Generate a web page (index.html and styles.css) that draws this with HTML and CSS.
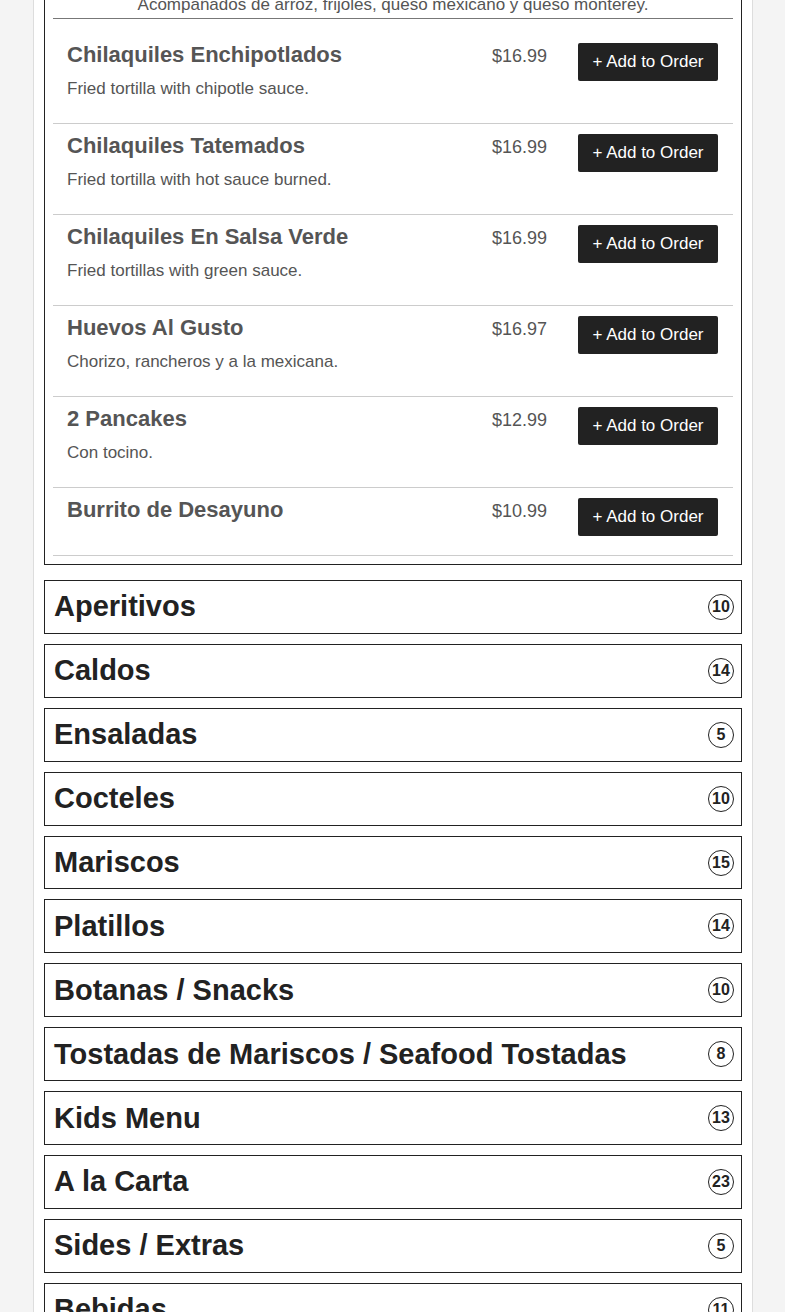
FILE: index.html
```html
<!DOCTYPE html>
<html lang="en">
<head>
<meta charset="utf-8">
<title>Menu</title>
<link rel="stylesheet" href="styles.css">
</head>
<body>
<div class="page">
  <section class="category open">
    <div class="cat-desc">Acompañados de arroz, frijoles, queso mexicano y queso monterey.</div>
    <div class="item first">
      <div class="info"><div class="name">Chilaquiles Enchipotlados</div><div class="desc">Fried tortilla with chipotle sauce.</div></div>
      <div class="price">$16.99</div>
      <div><button class="add">+ Add to Order</button></div>
    </div>
    <div class="item">
      <div class="info"><div class="name">Chilaquiles Tatemados</div><div class="desc">Fried tortilla with hot sauce burned.</div></div>
      <div class="price">$16.99</div>
      <div><button class="add">+ Add to Order</button></div>
    </div>
    <div class="item">
      <div class="info"><div class="name">Chilaquiles En Salsa Verde</div><div class="desc">Fried tortillas with green sauce.</div></div>
      <div class="price">$16.99</div>
      <div><button class="add">+ Add to Order</button></div>
    </div>
    <div class="item">
      <div class="info"><div class="name">Huevos Al Gusto</div><div class="desc">Chorizo, rancheros y a la mexicana.</div></div>
      <div class="price">$16.97</div>
      <div><button class="add">+ Add to Order</button></div>
    </div>
    <div class="item">
      <div class="info"><div class="name">2 Pancakes</div><div class="desc">Con tocino.</div></div>
      <div class="price">$12.99</div>
      <div><button class="add">+ Add to Order</button></div>
    </div>
    <div class="item">
      <div class="info"><div class="name">Burrito de Desayuno</div></div>
      <div class="price">$10.99</div>
      <div><button class="add">+ Add to Order</button></div>
    </div>
  </section>

  <section class="category closed"><h2 class="cat-title">Aperitivos</h2><span class="badge">10</span></section>
  <section class="category closed"><h2 class="cat-title">Caldos</h2><span class="badge">14</span></section>
  <section class="category closed"><h2 class="cat-title">Ensaladas</h2><span class="badge">5</span></section>
  <section class="category closed"><h2 class="cat-title">Cocteles</h2><span class="badge">10</span></section>
  <section class="category closed"><h2 class="cat-title">Mariscos</h2><span class="badge">15</span></section>
  <section class="category closed"><h2 class="cat-title">Platillos</h2><span class="badge">14</span></section>
  <section class="category closed"><h2 class="cat-title">Botanas / Snacks</h2><span class="badge">10</span></section>
  <section class="category closed"><h2 class="cat-title">Tostadas de Mariscos / Seafood Tostadas</h2><span class="badge">8</span></section>
  <section class="category closed"><h2 class="cat-title">Kids Menu</h2><span class="badge">13</span></section>
  <section class="category closed"><h2 class="cat-title">A la Carta</h2><span class="badge">23</span></section>
  <section class="category closed"><h2 class="cat-title">Sides / Extras</h2><span class="badge">5</span></section>
  <section class="category closed"><h2 class="cat-title">Bebidas</h2><span class="badge">11</span></section>
</div>
</body>
</html>
```

FILE: styles.css
```css
html, body {
  margin: 0;
  padding: 0;
}
body {
  background: #f4f4f4;
  font-family: "Liberation Sans", Arial, sans-serif;
  color: #222;
  overflow: hidden;
}
.page {
  width: 698px;
  margin: 0 auto 0 33px;
  padding: 0 10px 40px;
  background: #fff;
  border-left: 1px solid #ddd;
  border-right: 1px solid #ddd;
}
.category {
  border: 1px solid #222;
  background: #fff;
  box-sizing: border-box;
  margin-bottom: 10px;
}
.category.open {
  padding: 0 8px 8px;
  border-top: none;
  margin-top: -5px;
  margin-bottom: 15px;
}
.cat-desc {
  text-align: center;
  font-size: 17px;
  line-height: 20px;
  color: #555;
  padding-bottom: 3px;
  border-bottom: 1px solid #777;
}
.item {
  display: grid;
  grid-template-columns: 1fr 86px auto;
  align-items: start;
  padding: 9px 15px 19px 14px;
  border-bottom: 1px solid #ccc;
}
.item.first {
  padding-top: 23px;
}
.name {
  font-size: 22px;
  line-height: 25px;
  font-weight: bold;
  color: #555;
}
.desc {
  margin-top: 12px;
  margin-bottom: 5px;
  font-size: 17px;
  line-height: 20px;
  color: #555;
}
.price {
  padding-top: 4px;
  font-size: 18px;
  line-height: 21px;
  color: #555;
}
.add {
  display: block;
  margin-top: 1px;
  background: #222;
  color: #fff;
  border: none;
  border-radius: 2px;
  font-family: "Liberation Sans", Arial, sans-serif;
  font-size: 17px;
  line-height: 20px;
  padding: 9px 14.5px;
  cursor: pointer;
}
.category.closed {
  display: flex;
  align-items: center;
  justify-content: space-between;
  padding: 0 7px 0 9px;
  height: 53.9px;
}
.cat-title {
  margin: 0;
  font-size: 29px;
  line-height: 33px;
  font-weight: bold;
  color: #222;
}
.badge {
  flex: none;
  width: 24px;
  height: 24px;
  border: 1px solid #222;
  border-radius: 50%;
  display: flex;
  align-items: center;
  justify-content: center;
  font-size: 16px;
  font-weight: bold;
  color: #222;
}
```
